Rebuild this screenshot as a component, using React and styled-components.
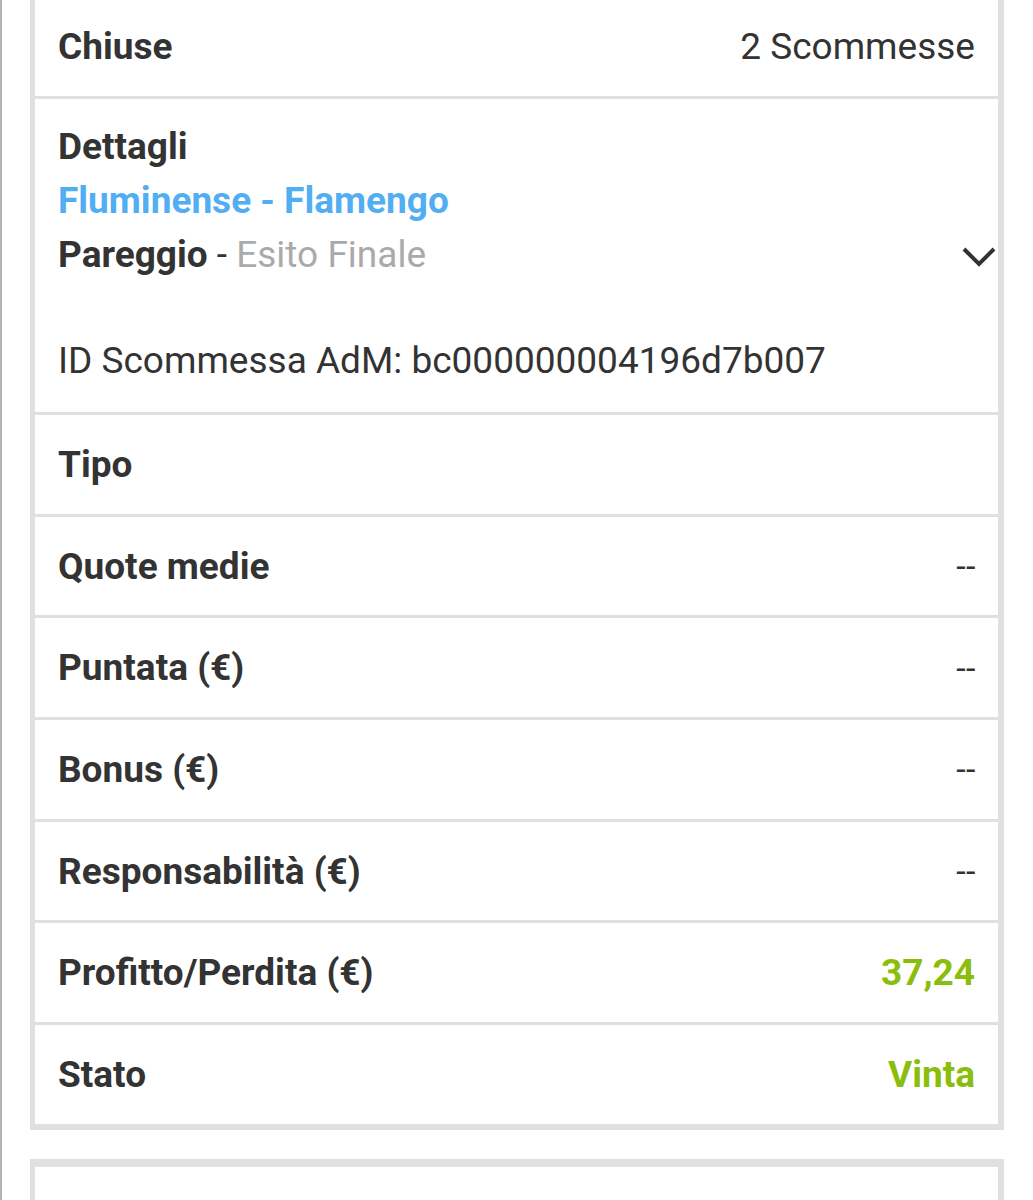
import React from "react";
import styled, { createGlobalStyle } from "styled-components";

const Global = createGlobalStyle`
  html, body { margin: 0; padding: 0; background: #ffffff; }
  body { font-family: Roboto, "Noto Sans", Arial, sans-serif; color: #333; overflow: hidden; }
`;

const Page = styled.div`
  border-left: 2px solid #b3b3b3;
  padding: 0 28px 0 28px;
  height: 1200px;
  box-sizing: border-box;
  overflow: hidden;
`;

const Card = styled.section`
  width: 974px;
  box-sizing: border-box;
  border: 6px solid #e0e0e0;
  border-left-width: 5px;
  border-top-width: 8px;
  background: #fff;
  margin-top: ${(p) => p.$top || "0px"};
  margin-bottom: 29px;
`;

const Row = styled.div`
  display: flex;
  align-items: center;
  justify-content: space-between;
  height: ${(p) => p.$h || "98.7px"};
  padding: 0 23px;
  border-top: ${(p) => (p.$first ? "none" : "3px solid #e0e0e0")};
  box-sizing: content-box;
`;

const Label = styled.span`
  font-size: 37px;
  font-weight: 700;
  color: #333;
`;

const Value = styled.span`
  font-size: 37px;
  font-weight: ${(p) => (p.$bold ? 700 : 400)};
  color: ${(p) => p.$color || "#333"};
`;

const Dash = styled.span`
  font-size: 34px;
  color: #333;
  letter-spacing: 0.5px;
  margin-right: -1px;
  font-variant-ligatures: none;
`;

const DetailRow = styled.div`
  position: relative;
  border-top: 3px solid #e0e0e0;
  padding: 21px 23px 24px;
  display: flex;
  flex-direction: column;
`;

const Line = styled.div`
  font-size: 37px;
  line-height: 54px;
  font-weight: ${(p) => (p.$bold ? 700 : 400)};
  color: ${(p) => p.$color || "#333"};
  white-space: nowrap;
`;

const Muted = styled.span`
  color: #aaaaaa;
  font-weight: 400;
`;

const Regular = styled.span`
  font-weight: 400;
`;

const IdLine = styled(Line)`
  margin-top: 52px;
`;

const Chevron = styled.svg`
  position: absolute;
  right: 1px;
  top: 146px;
  width: 36px;
  height: 24px;
`;

const EmptyCard = styled(Card)`
  height: 120px;
  margin-bottom: 0;
`;

const rows = [
  { label: "Tipo", value: null },
  { label: "Quote medie", value: "dash" },
  { label: "Puntata (€)", value: "dash" },
  { label: "Bonus (€)", value: "dash" },
  { label: "Responsabilità (€)", value: "dash" },
  { label: "Profitto/Perdita (€)", value: "37,24", green: true },
  { label: "Stato", value: "Vinta", green: true },
];

export default function App() {
  return (
    <>
      <Global />
      <Page>
        <Card $top="-11px">
          <Row $first $h="99px">
            <Label>Chiuse</Label>
            <Value>2 Scommesse</Value>
          </Row>
          <DetailRow>
            <Line $bold>Dettagli</Line>
            <Line $bold $color="#52aef2">Fluminense - Flamengo</Line>
            <Line $bold>
              Pareggio <Regular>-</Regular> <Muted>Esito Finale</Muted>
            </Line>
            <Chevron viewBox="0 0 36 24" fill="none">
              <polyline
                points="3,4 18,19 33,4"
                stroke="#333"
                strokeWidth="4"
                strokeLinecap="butt"
                strokeLinejoin="miter"
              />
            </Chevron>
            <IdLine>ID Scommessa AdM: bc000000004196d7b007</IdLine>
          </DetailRow>
          {rows.map((r) => (
            <Row key={r.label}>
              <Label>{r.label}</Label>
              {r.value === "dash" && <Dash>--</Dash>}
              {r.value && r.value !== "dash" && (
                <Value $bold $color={r.green ? "#8bbd0c" : undefined}>
                  {r.value}
                </Value>
              )}
            </Row>
          ))}
        </Card>
        <EmptyCard />
      </Page>
    </>
  );
}
